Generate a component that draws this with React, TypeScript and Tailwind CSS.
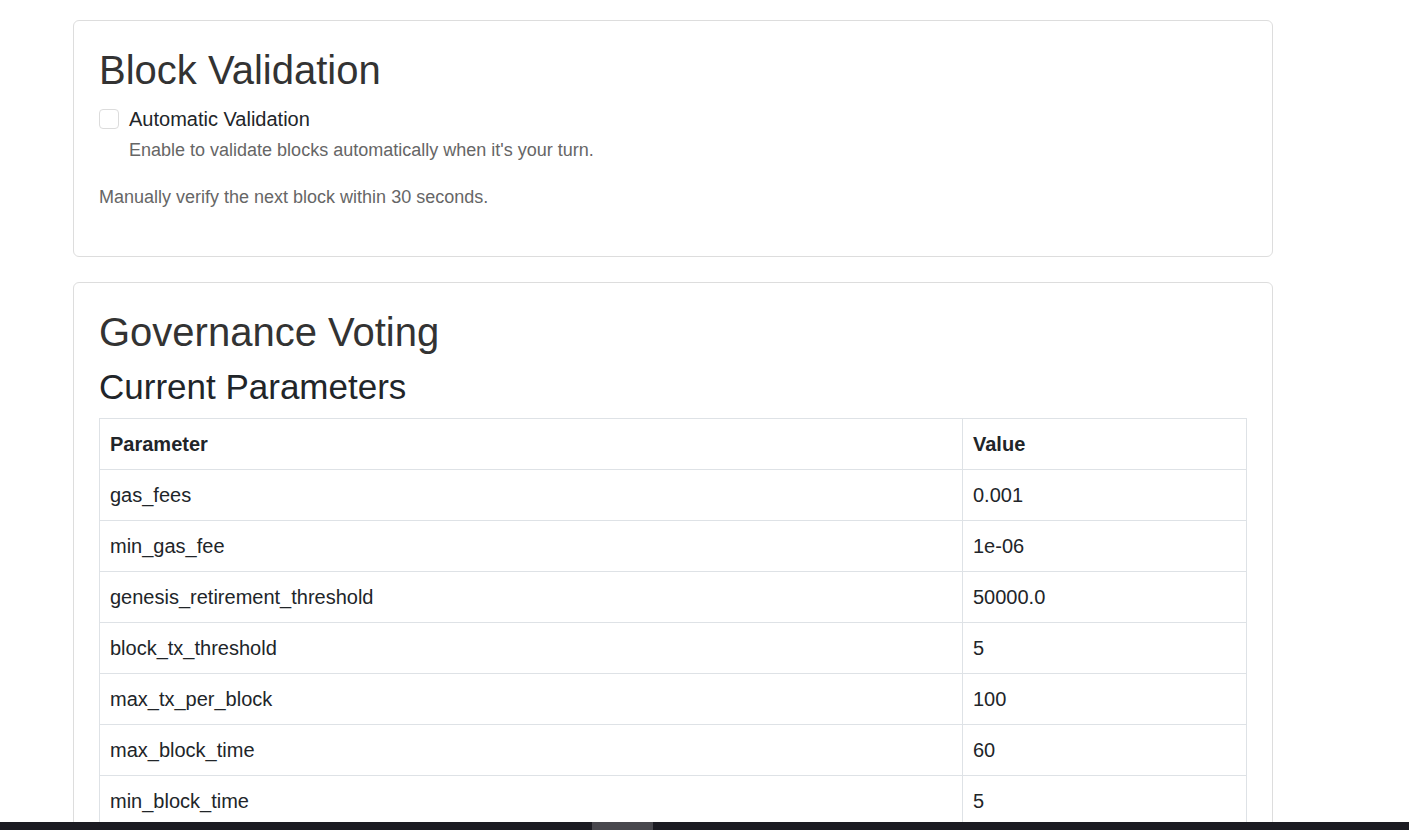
import React from "react";

const rows: [string, string][] = [
  ["gas_fees", "0.001"],
  ["min_gas_fee", "1e-06"],
  ["genesis_retirement_threshold", "50000.0"],
  ["block_tx_threshold", "5"],
  ["max_tx_per_block", "100"],
  ["max_block_time", "60"],
  ["min_block_time", "5"],
];

export default function App() {
  return (
    <div className="min-h-screen bg-white font-['Liberation_Sans',Arial,sans-serif] text-[20px] leading-[1.5] text-[#212529]">
      <div className="ml-[73px] w-[1200px] pt-[20px]">
        <div className="mb-[25px] rounded-[6px] border border-[#dddddd] p-[25px]">
          <h1 className="mb-[10px] text-[40px] font-normal leading-[1.2] text-[#333333]">Block Validation</h1>
          <div className="mb-[20px]">
            <div className="flex items-start">
              <span className="mt-[5px] h-[20px] w-[20px] shrink-0 rounded-[4px] border border-[#dcdcdc] bg-white" />
              <label className="ml-[10px] text-[#212529]">Automatic Validation</label>
            </div>
            <div className="ml-[30px] mt-[3px] text-[18px] text-[#666666]">
              Enable to validate blocks automatically when it's your turn.
            </div>
          </div>
          <p className="mb-[20px] text-[18px] text-[#666666]">Manually verify the next block within 30 seconds.</p>
        </div>

        <div className="mb-[25px] rounded-[6px] border border-[#dddddd] p-[25px]">
          <h1 className="mb-[10px] text-[40px] font-normal leading-[1.2] text-[#333333]">Governance Voting</h1>
          <h3 className="mb-[10px] text-[35px] font-normal leading-[1.2] text-[#212529]">Current Parameters</h3>
          <table className="w-full table-fixed border-collapse border border-[#dee2e6]">
            <colgroup>
              <col className="w-[863px]" />
              <col />
            </colgroup>
            <thead>
              <tr>
                <th className="border border-[#dee2e6] px-[10px] py-[10px] text-left font-bold">Parameter</th>
                <th className="border border-[#dee2e6] px-[10px] py-[10px] text-left font-bold">Value</th>
              </tr>
            </thead>
            <tbody>
              {rows.map(([k, v]) => (
                <tr key={k}>
                  <td className="border border-[#dee2e6] px-[10px] py-[10px]">{k}</td>
                  <td className="border border-[#dee2e6] px-[10px] py-[10px]">{v}</td>
                </tr>
              ))}
            </tbody>
          </table>
        </div>
      </div>

      <div className="fixed bottom-0 left-0 h-[8px] w-full bg-[#1b1b22]">
        <div className="absolute left-[592px] top-0 h-[8px] w-[61px] bg-[#48474d]" />
      </div>
    </div>
  );
}
